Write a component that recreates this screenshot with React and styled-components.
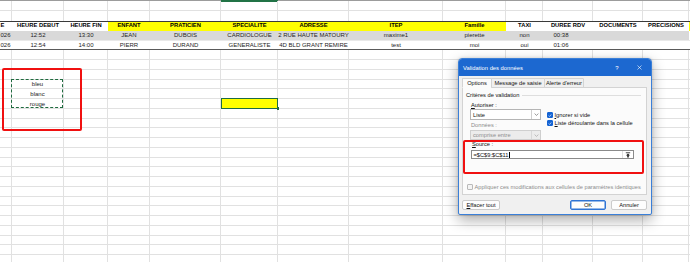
import React from 'react';
import styled, { createGlobalStyle } from 'styled-components';

const GlobalStyle = createGlobalStyle`
  html, body { margin: 0; padding: 0; background: #fff; }
  body { width: 690px; height: 262px; overflow: hidden; font-family: "Liberation Sans", Arial, sans-serif; }
  #root { width: 690px; height: 262px; }
`;

const COLS = [12, 52, 44, 42, 71, 57, 71, 94, 63, 37, 50, 50, 46, 2];
const TEMPLATE = COLS.map((c) => `${c}px`).join(' ');
const GRID = '#e1e1e1';
const YELLOW = '#ffff00';
const EXCEL_GREEN = '#217346';

const Page = styled.div`
  position: relative;
  width: 690px;
  height: 262px;
  overflow: hidden;
  background: #fff;
`;

const Sheet = styled.div`
  display: flex;
  flex-direction: column;
  width: 690px;
`;

const EdgeLine = styled.div`
  display: grid;
  grid-template-columns: ${TEMPLATE};
  height: 1px;
  background: #9c9c9c;
  align-items: start;
`;

const EdgeSeg = styled.div`
  height: ${(p) => (p.$sel ? 2 : 1)}px;
  background: ${(p) => (p.$sel ? EXCEL_GREEN : 'transparent')};
`;

const Row = styled.div`
  display: grid;
  grid-template-columns: ${TEMPLATE};
  height: ${(p) => p.$h}px;
  box-sizing: border-box;
  background: ${(p) => p.$bg || 'transparent'};
  border-top: ${(p) => (p.$top ? `1px solid ${p.$top}` : 'none')};
  border-bottom: ${(p) => (p.$bottom === 'none' ? 'none' : `1px solid ${p.$bottom || GRID}`)};
`;

const Cell = styled.div`
  position: relative;
  display: flex;
  align-items: center;
  justify-content: ${(p) => p.$align || 'center'};
  box-sizing: border-box;
  min-width: 0;
  padding: ${(p) => p.$pad || '0'};
  border-right: ${(p) => (p.$grid ? `1px solid ${GRID}` : 'none')};
  background: ${(p) => p.$bg || 'transparent'};
  font-size: ${(p) => (p.$bold ? 5.8 : 6)}px;
  font-weight: ${(p) => (p.$bold ? 700 : 400)};
  color: ${(p) => (p.$bold ? '#000' : '#1e1e1e')};
  white-space: nowrap;
  line-height: 1;

  ${(p) =>
    p.$selected &&
    `
    &::after {
      content: '';
      position: absolute;
      left: 0; top: -1px; right: -1px; bottom: -1px;
      border: 1.2px solid #1d6b43;
    }
    &::before {
      content: '';
      position: absolute;
      right: -2px; bottom: -2px;
      width: 2.5px; height: 2.5px;
      background: #1d6b43;
      z-index: 1;
    }
  `}
`;

const Marquee = styled.div`
  position: absolute;
  left: 11px;
  top: 79px;
  width: 52px;
  height: 29px;
  box-sizing: border-box;
  border: 1px dashed #1f6b3f;
`;

const Annotation = styled.div`
  position: absolute;
  left: ${(p) => p.$x}px;
  top: ${(p) => p.$y}px;
  width: ${(p) => p.$w}px;
  height: ${(p) => p.$h}px;
  box-sizing: border-box;
  border: 2px solid #f01010;
  border-radius: 2px;
  z-index: 5;
`;

/* ---------- Dialog ---------- */

const Dialog = styled.div`
  position: absolute;
  left: 458px;
  top: 58px;
  width: 194px;
  height: 157px;
  box-sizing: border-box;
  border: 1px solid #3a7fd8;
  border-radius: 4px 4px 2px 2px;
  background: #f0f0f0;
  box-shadow: 0 5px 14px rgba(0, 0, 0, 0.33), 0 0 3px rgba(0, 0, 0, 0.15);
  display: flex;
  flex-direction: column;
  overflow: hidden;
  font-family: "Liberation Sans", Arial, sans-serif;
  font-size: 5.7px;
  color: #111;
  z-index: 3;
`;

const TitleBar = styled.div`
  flex: none;
  height: 17px;
  display: flex;
  align-items: center;
  padding-left: 4px;
  background: #1c68d0;
  color: #fff;
  font-size: 5.8px;
`;

const TitleText = styled.span`
  flex: 1;
`;

const TitleButton = styled.div`
  width: ${(p) => p.$w}px;
  height: 100%;
  display: flex;
  align-items: center;
  justify-content: center;
  font-size: 6px;
`;

const Body = styled.div`
  flex: 1;
  display: flex;
  flex-direction: column;
  padding: 2px 4px 0 3px;
`;

const Tabs = styled.div`
  display: flex;
  align-items: flex-end;
  height: 10px;
  margin-bottom: -1px;
  position: relative;
  z-index: 1;
`;

const Tab = styled.div`
  width: ${(p) => p.$w}px;
  height: 10px;
  box-sizing: border-box;
  margin-left: ${(p) => (p.$first ? 0 : -1)}px;
  display: flex;
  align-items: center;
  justify-content: center;
  border: 1px solid #d3d3d3;
  border-bottom-color: ${(p) => (p.$active ? '#fbfbfb' : '#d3d3d3')};
  background: ${(p) => (p.$active ? '#fbfbfb' : '#f0f0f0')};
  border-radius: 1px 1px 0 0;
`;

const Panel = styled.div`
  height: 108px;
  box-sizing: border-box;
  border: 1px solid #d3d3d3;
  background: #fbfbfb;
  padding: 3.5px 3px 0 3px;
  display: flex;
  flex-direction: column;
`;

const GroupLabel = styled.div`
  display: flex;
  align-items: center;
  height: 7px;
  &::after {
    content: '';
    flex: 1;
    height: 1px;
    margin: 0 2px 0 3px;
    background: #dedede;
  }
`;

const CriteriaRow = styled.div`
  display: flex;
  margin: 3px 0 0 4px;
`;

const LeftCol = styled.div`
  width: 71px;
  display: flex;
  flex-direction: column;
`;

const FieldLabel = styled.div`
  height: 7px;
  line-height: 7px;
  margin-left: 1px;
  margin-top: ${(p) => p.$mt || 0}px;
  color: ${(p) => (p.$disabled ? '#8c8c8c' : '#111')};
`;

const Select = styled.div`
  height: ${(p) => p.$h}px;
  margin-top: ${(p) => p.$mt || 0}px;
  box-sizing: border-box;
  display: flex;
  align-items: center;
  border: 1px solid ${(p) => (p.$disabled ? '#cfcfcf' : '#b5b5b5')};
  background: ${(p) => (p.$disabled ? '#ececec' : '#fff')};
  color: ${(p) => (p.$disabled ? '#8e8e8e' : '#111')};
`;

const SelectText = styled.span`
  flex: 1;
  padding-left: 2px;
`;

const SelectArrow = styled.span`
  width: 8px;
  height: 100%;
  display: flex;
  align-items: center;
  justify-content: center;
  border-left: 1px solid ${(p) => (p.$disabled ? '#d8d8d8' : '#d0d0d0')};
`;

const RightCol = styled.div`
  margin-left: 6px;
  padding-top: 9.5px;
  display: flex;
  flex-direction: column;
`;

const CheckRow = styled.div`
  display: flex;
  align-items: center;
  height: 8px;
  color: ${(p) => (p.$disabled ? '#8c8c8c' : '#111')};
  margin: ${(p) => p.$m || '0'};
`;

const Box = styled.span`
  width: 6px;
  height: 6px;
  box-sizing: border-box;
  margin-right: 1.5px;
  border-radius: 1px;
  display: flex;
  align-items: center;
  justify-content: center;
  background: ${(p) => (p.$checked ? '#1463d3' : '#f4f4f4')};
  border: 1px solid ${(p) => (p.$checked ? '#1463d3' : '#b9b9b9')};
`;

const SourceBlock = styled.div`
  display: flex;
  flex-direction: column;
  margin: 0.5px 0 0 5px;
`;

const SourceInput = styled.div`
  width: 163px;
  height: 9px;
  margin-top: 2.5px;
  box-sizing: border-box;
  display: flex;
  align-items: center;
  border: 1px solid #8a8a8a;
  background: #fff;
  padding-left: 1.5px;
`;

const Caret = styled.span`
  width: 0.6px;
  height: 6px;
  background: #000;
  margin-left: 0.3px;
`;

const RefButton = styled.span`
  margin-left: auto;
  width: 10px;
  height: 100%;
  display: flex;
  align-items: center;
  justify-content: center;
  border-left: 1px solid #e0e0e0;
`;

const ButtonRow = styled.div`
  display: flex;
  margin-top: 4.5px;
  height: 10px;
`;

const Button = styled.div`
  width: ${(p) => p.$w}px;
  height: 10px;
  box-sizing: border-box;
  margin-left: ${(p) => p.$ml || 0};
  display: flex;
  align-items: center;
  justify-content: center;
  border: 1px solid ${(p) => (p.$primary ? '#2f74d4' : '#cbcbcb')};
  border-radius: 2px;
  background: #fdfdfd;
  box-shadow: ${(p) => (p.$primary ? 'inset 0 0 0 0.5px #2f74d4' : 'none')};
`;

const headers = [
  { t: 'E', align: 'flex-start', pad: '0 0 0 0.5px' },
  { t: 'HEURE DEBUT' },
  { t: 'HEURE FIN' },
  { t: 'ENFANT', y: true },
  { t: 'PRATICIEN', y: true },
  { t: 'SPECIALITE', y: true },
  { t: 'ADRESSE', y: true },
  { t: 'ITEP', y: true },
  { t: 'Famille', y: true },
  { t: 'TAXI' },
  { t: 'DUREE RDV' },
  { t: 'DOCUMENTS' },
  { t: 'PRECISIONS' },
  { t: '', y: true },
];

const dataRows = [
  ['026', '12:52', '13:30', 'JEAN', 'DUBOIS', 'CARDIOLOGUE', '2 RUE HAUTE MATOURY', 'maxime1', 'pierette', 'non', '00:38', '', '', ''],
  ['026', '12:54', '14:00', 'PIERR', 'DURAND', 'GENERALISTE', '4D BLD GRANT REMIRE', 'test', 'moi', 'oui', '01:06', '', '', ''],
];

const listValues = { 3: 'bleu', 4: 'blanc', 5: 'rouge' };
const EMPTY_ROWS = 22;

const cellPad = (i) => {
  if (i === 0) return '0 1.5px 0 0';
  if (i === 10) return '0 14px 0 0';
  return '0';
};

const Check = () => (
  <svg width="5" height="5" viewBox="0 0 5 5">
    <path d="M0.9 2.6 L2 3.7 L4.1 1.2" fill="none" stroke="#fff" strokeWidth="0.8" />
  </svg>
);

const Chevron = ({ color }) => (
  <svg width="5" height="3" viewBox="0 0 5 3">
    <path d="M0.6 0.6 L2.5 2.4 L4.4 0.6" fill="none" stroke={color} strokeWidth="0.6" />
  </svg>
);

export default function App() {
  return (
    <>
      <GlobalStyle />
      <Page>
        <Sheet>
          <EdgeLine>
            {COLS.map((_, i) => (
              <EdgeSeg key={i} $sel={i === 5} />
            ))}
          </EdgeLine>
          <Row $h={9.8}>
            {COLS.map((_, i) => (
              <Cell key={i} $grid />
            ))}
          </Row>
          <Row $h={9.8} $bottom="none">
            {COLS.map((_, i) => (
              <Cell key={i} $grid />
            ))}
          </Row>
          <Row $h={10.4} $top="#3a3a3a" $bottom="none">
            {headers.map((h, i) => (
              <Cell key={i} $bold $bg={h.y ? YELLOW : undefined} $align={h.align} $pad={h.pad}>
                {h.t}
              </Cell>
            ))}
          </Row>
          {dataRows.map((r, ri) => (
            <Row
              key={ri}
              $h={ri === 0 ? 10 : 9.4}
              $bg={ri === 0 ? '#d9d9d9' : '#fff'}
              $bottom={ri === 0 ? '#e9e9e9' : '#5a5a5a'}
            >
              {r.map((v, i) => (
                <Cell
                  key={i}
                  $align={i === 0 ? 'flex-end' : 'center'}
                  $pad={cellPad(i)}
                  $bg={ri === 0 && i === 13 ? '#fff' : undefined}
                >
                  {v}
                </Cell>
              ))}
            </Row>
          ))}
          {Array.from({ length: EMPTY_ROWS }).map((_, ri) => (
            <Row key={`e${ri}`} $h={9.75}>
              {COLS.map((_, i) => (
                <Cell
                  key={i}
                  $grid
                  $bg={ri === 5 && i === 5 ? YELLOW : undefined}
                  $selected={ri === 5 && i === 5}
                >
                  {i === 1 ? listValues[ri] : null}
                </Cell>
              ))}
            </Row>
          ))}
        </Sheet>

        <Marquee />
        <Annotation $x={2} $y={68} $w={80} $h={63} />

        <Dialog>
          <TitleBar>
            <TitleText>Validation des données</TitleText>
            <TitleButton $w={20}>?</TitleButton>
            <TitleButton $w={24}>
              <svg width="5" height="5" viewBox="0 0 5 5">
                <path d="M0.5 0.5 L4.5 4.5 M4.5 0.5 L0.5 4.5" stroke="#fff" strokeWidth="0.6" />
              </svg>
            </TitleButton>
          </TitleBar>
          <Body>
            <Tabs>
              <Tab $w={30} $first $active>Options</Tab>
              <Tab $w={54}>Message de saisie</Tab>
              <Tab $w={40}>Alerte d'erreur</Tab>
            </Tabs>
            <Panel>
              <GroupLabel>Critères de validation</GroupLabel>
              <CriteriaRow>
                <LeftCol>
                  <FieldLabel>
                    <u>A</u>utoriser :
                  </FieldLabel>
                  <Select $h={11} $mt={0.5}>
                    <SelectText>Liste</SelectText>
                    <SelectArrow>
                      <Chevron color="#555" />
                    </SelectArrow>
                  </Select>
                  <FieldLabel $mt={1.5} $disabled>
                    Données :
                  </FieldLabel>
                  <Select $h={10} $mt={1.5} $disabled>
                    <SelectText>comprise entre</SelectText>
                    <SelectArrow $disabled>
                      <Chevron color="#9a9a9a" />
                    </SelectArrow>
                  </Select>
                </LeftCol>
                <RightCol>
                  <CheckRow>
                    <Box $checked>
                      <Check />
                    </Box>
                    <span>
                      <u>I</u>gnorer si vide
                    </span>
                  </CheckRow>
                  <CheckRow>
                    <Box $checked>
                      <Check />
                    </Box>
                    <span>
                      <u>L</u>iste déroulante dans la cellule
                    </span>
                  </CheckRow>
                </RightCol>
              </CriteriaRow>
              <SourceBlock>
                <FieldLabel>
                  <u>S</u>ource :
                </FieldLabel>
                <SourceInput>
                  <span>=$C$9:$C$11</span>
                  <Caret />
                  <RefButton>
                    <svg width="6" height="6" viewBox="0 0 6 6">
                      <rect x="0.8" y="0.4" width="4.4" height="0.8" fill="#222" />
                      <path d="M3 1.6 L5 3.6 H3.8 V5.6 H2.2 V3.6 H1 Z" fill="#222" />
                    </svg>
                  </RefButton>
                </SourceInput>
              </SourceBlock>
              <CheckRow $disabled $m="23.5px 0 0 1px">
                <Box />
                <span>Appliquer ces modifications aux cellules de paramètres identiques</span>
              </CheckRow>
            </Panel>
            <ButtonRow>
              <Button $w={38}>
                <span>
                  <u>E</u>ffacer tout
                </span>
              </Button>
              <Button $w={36} $ml="auto" $primary>
                OK
              </Button>
              <Button $w={36} $ml="5px">
                Annuler
              </Button>
            </ButtonRow>
          </Body>
        </Dialog>
        <Annotation $x={463} $y={140} $w={181} $h={34} />
      </Page>
    </>
  );
}
